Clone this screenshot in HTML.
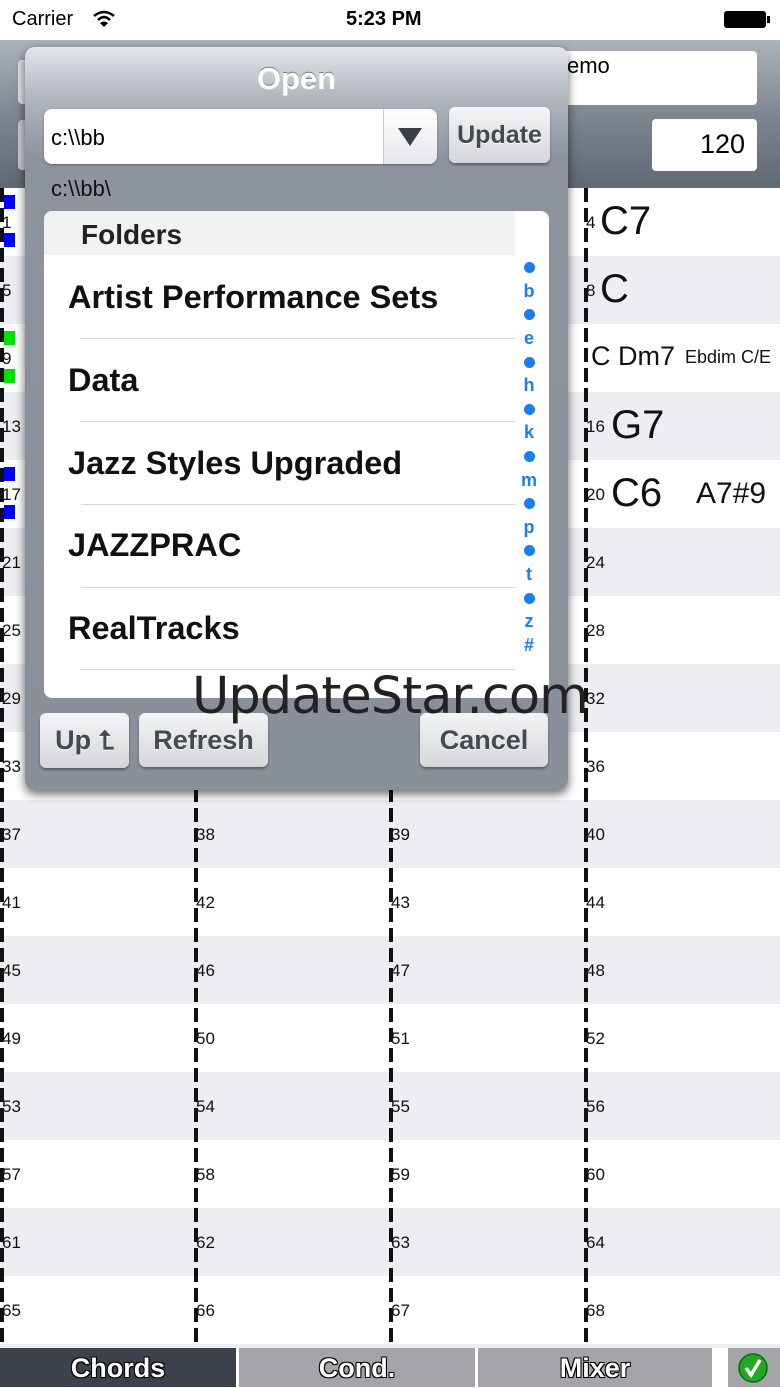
<!DOCTYPE html>
<html><head><meta charset="utf-8">
<style>
*{margin:0;padding:0;box-sizing:border-box}
body{width:780px;height:1387px;position:relative;overflow:hidden;background:#fff;font-family:"Liberation Sans",Arial,sans-serif}
.abs{position:absolute}
.status{top:0;left:0;width:780px;height:40px;background:#fff;font-size:20px}
.toolbar{top:40px;left:0;width:780px;height:148px;background:linear-gradient(#aeb3ba,#7e8691 50%,#5f6872)}
.row{position:absolute;left:0;width:780px;height:68px}
.row.g{background:#eceef1}
.row span{position:absolute;top:25px;font-size:17px;color:#111}
.dash{position:absolute;top:188px;width:4px;height:1160px;background:repeating-linear-gradient(#111 0 14px,transparent 14px 20px)}
.chord{position:absolute;font-size:40px;color:#111}
.tabs{top:1348px;left:0;width:780px;height:39px;background:#fff}
.tab{position:absolute;top:0;height:39px;color:#fff;font-weight:bold;font-size:27px;text-align:center;line-height:40px;text-shadow:-1px -1px 0 #000,1px 1px 0 #000,1px -1px 0 #000,-1px 1px 0 #000}
.dlg{left:25px;top:47px;width:543px;height:743px;border-radius:10px;background:linear-gradient(#e4e7ec 0,#b1b7bf 50px,#8d949e 110px,#89909a);box-shadow:0 4px 10px rgba(0,0,0,.6)}
.btn{position:absolute;border-radius:6px;background:linear-gradient(#f3f4f5,#d4d6d9);color:#444a52;font-weight:bold;font-size:27px;text-align:center;box-shadow:0 2px 2px rgba(0,0,0,.35);text-shadow:0 1px 0 #fff}
.item{position:absolute;left:24px;font-size:32.5px;font-weight:bold;color:#111}
.sep{position:absolute;left:37px;width:434px;height:1px;background:#d8d8d8}
.idx{position:absolute;left:472px;width:26px;text-align:center;color:#1a7ef0;font-size:18px;font-weight:bold}
.idx>div{height:23.6px;display:flex;align-items:center;justify-content:center}
.dot i{display:block;width:11px;height:11px;border-radius:50%;background:#1a7ef0}
</style></head><body>
<div class="abs status">
 <div class="abs" style="left:12px;top:8px">Carrier</div>
 <svg class="abs" style="left:92px;top:10px" width="24" height="18" viewBox="0 0 24 18"><path d="M2 6 Q12 -2 22 6" stroke="#000" stroke-width="2.5" fill="none"/><path d="M6 10 Q12 4 18 10" stroke="#000" stroke-width="2.5" fill="none"/><path d="M12 17 L8 13 Q12 10 16 13Z" fill="#000"/></svg>
 <div class="abs" style="left:346px;top:8px;font-weight:bold">5:23 PM</div>
 <div class="abs" style="left:724px;top:11px;width:42px;height:17px;background:#000;border-radius:3px"></div>
 <div class="abs" style="left:767px;top:16px;width:3px;height:7px;background:#000"></div>
</div>
<div class="abs toolbar">
 <div class="abs" style="left:545px;top:11px;width:212px;height:54px;background:#fff;border-radius:4px;font-size:22px;padding:2px 0 0 22px">emo</div>
 <div class="abs" style="left:652px;top:79px;width:105px;height:52px;background:#fff;border-radius:4px;font-size:27px;text-align:right;padding:10px 12px 0 0">120</div>
 <div class="abs" style="left:18px;top:20px;width:20px;height:44px;background:#dfe2e6;border-radius:4px"></div>
 <div class="abs" style="left:18px;top:80px;width:20px;height:50px;background:#c8ccd1;border-radius:4px"></div>
</div>

<div class="row" style="top:188px"><span style="left:2px">1</span><span style="left:586px">4</span></div>
<div class="row g" style="top:256px"><span style="left:2px">5</span><span style="left:586px">8</span></div>
<div class="row" style="top:324px"><span style="left:2px">9</span></div>
<div class="row g" style="top:392px"><span style="left:2px">13</span><span style="left:586px">16</span></div>
<div class="row" style="top:460px"><span style="left:2px">17</span><span style="left:586px">20</span></div>
<div class="row g" style="top:528px"><span style="left:2px">21</span><span style="left:196px">22</span><span style="left:391px">23</span><span style="left:586px">24</span></div>
<div class="row" style="top:596px"><span style="left:2px">25</span><span style="left:196px">26</span><span style="left:391px">27</span><span style="left:586px">28</span></div>
<div class="row g" style="top:664px"><span style="left:2px">29</span><span style="left:196px">30</span><span style="left:391px">31</span><span style="left:586px">32</span></div>
<div class="row" style="top:732px"><span style="left:2px">33</span><span style="left:196px">34</span><span style="left:391px">35</span><span style="left:586px">36</span></div>
<div class="row g" style="top:800px"><span style="left:2px">37</span><span style="left:196px">38</span><span style="left:391px">39</span><span style="left:586px">40</span></div>
<div class="row" style="top:868px"><span style="left:2px">41</span><span style="left:196px">42</span><span style="left:391px">43</span><span style="left:586px">44</span></div>
<div class="row g" style="top:936px"><span style="left:2px">45</span><span style="left:196px">46</span><span style="left:391px">47</span><span style="left:586px">48</span></div>
<div class="row" style="top:1004px"><span style="left:2px">49</span><span style="left:196px">50</span><span style="left:391px">51</span><span style="left:586px">52</span></div>
<div class="row g" style="top:1072px"><span style="left:2px">53</span><span style="left:196px">54</span><span style="left:391px">55</span><span style="left:586px">56</span></div>
<div class="row" style="top:1140px"><span style="left:2px">57</span><span style="left:196px">58</span><span style="left:391px">59</span><span style="left:586px">60</span></div>
<div class="row g" style="top:1208px"><span style="left:2px">61</span><span style="left:196px">62</span><span style="left:391px">63</span><span style="left:586px">64</span></div>
<div class="row" style="top:1276px"><span style="left:2px">65</span><span style="left:196px">66</span><span style="left:391px">67</span><span style="left:586px">68</span></div>
<div class="row g" style="top:1344px;height:4px"></div>

<div class="dash" style="left:0"></div>
<div class="dash" style="left:194px"></div>
<div class="dash" style="left:389px"></div>
<div class="dash" style="left:584px"></div>
<div class="abs" style="left:4px;top:195px;width:11px;height:14px;background:#0000ff"></div>
<div class="abs" style="left:4px;top:233px;width:11px;height:14px;background:#0000ff"></div>
<div class="abs" style="left:4px;top:331px;width:11px;height:14px;background:#00e000"></div>
<div class="abs" style="left:4px;top:369px;width:11px;height:14px;background:#00e000"></div>
<div class="abs" style="left:4px;top:467px;width:11px;height:14px;background:#0000ff"></div>
<div class="abs" style="left:4px;top:505px;width:11px;height:14px;background:#0000ff"></div>

<div class="chord" style="left:600px;top:199px">C7</div>
<div class="chord" style="left:600px;top:267px">C</div>
<div class="chord" style="left:591px;top:341px;font-size:27px">C Dm7</div>
<div class="chord" style="left:685px;top:347px;font-size:18px">Ebdim C/E</div>
<div class="chord" style="left:611px;top:403px">G7</div>
<div class="chord" style="left:611px;top:471px">C6</div>
<div class="chord" style="left:696px;top:477px;font-size:30px">A7#9</div>

<div class="abs dlg">
 <div class="abs" style="left:0;width:543px;top:14px;text-align:center;font-size:31px;font-weight:bold;color:#fff;text-shadow:0 -1px 0 #777">Open</div>
 <div class="abs" style="left:19px;top:62px;width:393px;height:55px;background:#fff;border-radius:8px;font-size:22px;padding:16px 0 0 7px;box-shadow:0 1px 2px rgba(0,0,0,.3)">c:\\bb
  <div class="abs" style="left:339px;top:0;width:54px;height:55px;border-left:1px solid #ccc;background:linear-gradient(#fff,#e6e7ea);border-radius:0 8px 8px 0"><svg class="abs" style="left:14px;top:19px" width="24" height="18"><path d="M0 0H24L12 18Z" fill="#3a3f47"/></svg></div>
 </div>
 <div class="btn" style="left:424px;top:60px;width:101px;height:56px;line-height:56px;font-size:25px">Update</div>
 <div class="abs" style="left:26px;top:129px;font-size:22px;color:#111">c:\\bb\</div>
 <div class="abs" style="left:19px;top:164px;width:505px;height:487px;background:#fff;border-radius:8px;overflow:hidden">
  <div class="abs" style="left:0;top:0;width:471px;height:44px;background:#f1f2f3;font-size:28px;font-weight:bold;color:#222;padding:8px 0 0 37px">Folders</div>
  <div class="item" style="top:68px">Artist Performance Sets</div>
  <div class="sep" style="top:127px"></div>
  <div class="item" style="top:151px">Data</div>
  <div class="sep" style="top:210px"></div>
  <div class="item" style="top:234px">Jazz Styles Upgraded</div>
  <div class="sep" style="top:293px"></div>
  <div class="item" style="top:316px">JAZZPRAC</div>
  <div class="sep" style="top:376px"></div>
  <div class="item" style="top:399px">RealTracks</div>
  <div class="sep" style="top:458px"></div>
  <div class="idx" style="top:45px">
   <div class="dot"><i></i></div><div>b</div><div class="dot"><i></i></div><div>e</div><div class="dot"><i></i></div><div>h</div><div class="dot"><i></i></div><div>k</div><div class="dot"><i></i></div><div>m</div><div class="dot"><i></i></div><div>p</div><div class="dot"><i></i></div><div>t</div><div class="dot"><i></i></div><div>z</div><div>#</div>
  </div>
 </div>
 <div class="btn" style="left:15px;top:666px;width:89px;height:55px;line-height:55px">Up <span style="font-size:26px">⮤</span></div>
 <div class="btn" style="left:114px;top:666px;width:129px;height:54px;line-height:54px">Refresh</div>
 <div class="btn" style="left:395px;top:666px;width:128px;height:54px;line-height:54px">Cancel</div>
</div>
<div class="abs" style="left:192px;top:667px;font-size:51px;color:#222;font-family:'DejaVu Sans',sans-serif;letter-spacing:-1px;line-height:60px">UpdateStar.com</div>

<div class="abs tabs">
 <div class="tab" style="left:0;width:236px;background:#3b424c">Chords</div>
 <div class="tab" style="left:239px;width:236px;background:#a3a5a8">Cond.</div>
 <div class="tab" style="left:478px;width:234px;background:#a3a5a8">Mixer</div>
 <div class="tab" style="left:728px;width:52px;background:#a3a5a8"></div>
 <svg class="abs" style="left:738px;top:5px" width="30" height="30" viewBox="0 0 30 30"><circle cx="15" cy="15" r="14" fill="#22a824" stroke="#0b6a10" stroke-width="1.5"/><path d="M8 15 L13 22 L22 7" stroke="#fff" stroke-width="3.5" fill="none"/></svg>
</div>
</body></html>
